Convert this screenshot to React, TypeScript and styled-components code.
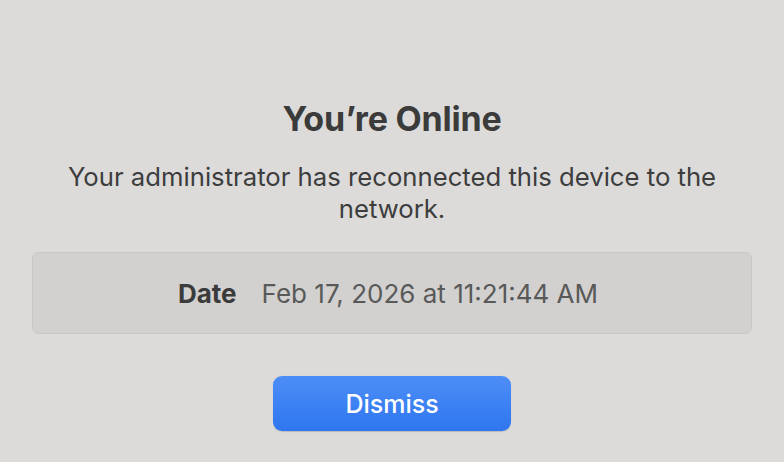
import React from "react";
import styled, { createGlobalStyle } from "styled-components";

const GlobalStyle = createGlobalStyle`
  html, body { margin: 0; padding: 0; background: #dcdbda; }
  body { font-family: Inter, "Noto Sans", "Liberation Sans", sans-serif; -webkit-font-smoothing: antialiased; }
`;

const Sheet = styled.div`
  width: 784px;
  height: 462px;
  box-sizing: border-box;
  background: #dcdbda;
  display: flex;
  flex-direction: column;
  align-items: center;
  padding: 100px 32px 0;
  overflow: hidden;
`;

const Title = styled.h1`
  margin: 0;
  font-size: 34px;
  line-height: 38px;
  font-weight: 700;
  color: #3b3b3b;
  letter-spacing: -0.2px;
`;

const Message = styled.p`
  margin: 23px 0 0;
  max-width: 680px;
  text-align: center;
  font-size: 25.7px;
  line-height: 31.5px;
  font-weight: 400;
  color: #3d3d3d;
`;

const InfoBox = styled.div`
  margin-top: 28px;
  align-self: stretch;
  height: 82px;
  box-sizing: border-box;
  background: #d2d1d0;
  border: 1px solid #c8c7c6;
  border-radius: 7px;
  display: flex;
  align-items: center;
  justify-content: center;
  gap: 25px;
  font-size: 26px;
  padding-right: 8px;
`;

const Label = styled.span`
  font-weight: 700;
  color: #3b3b3b;
`;

const Value = styled.span`
  font-weight: 400;
  color: #595959;
`;

const Button = styled.button`
  margin-top: 42px;
  width: 238px;
  height: 55px;
  border: none;
  border-radius: 9px;
  background: linear-gradient(to bottom, #4c8ef7, #2f76ef);
  color: #ffffff;
  font-family: inherit;
  font-size: 25px;
  font-weight: 500;
  box-shadow: 0 0.5px 1px rgba(0, 0, 0, 0.15);
  cursor: pointer;
`;

export default function App() {
  return (
    <>
      <GlobalStyle />
      <Sheet>
        <Title>You’re Online</Title>
        <Message>Your administrator has reconnected this device to the network.</Message>
        <InfoBox>
          <Label>Date</Label>
          <Value>Feb 17, 2026 at 11:21:44 AM</Value>
        </InfoBox>
        <Button>Dismiss</Button>
      </Sheet>
    </>
  );
}
